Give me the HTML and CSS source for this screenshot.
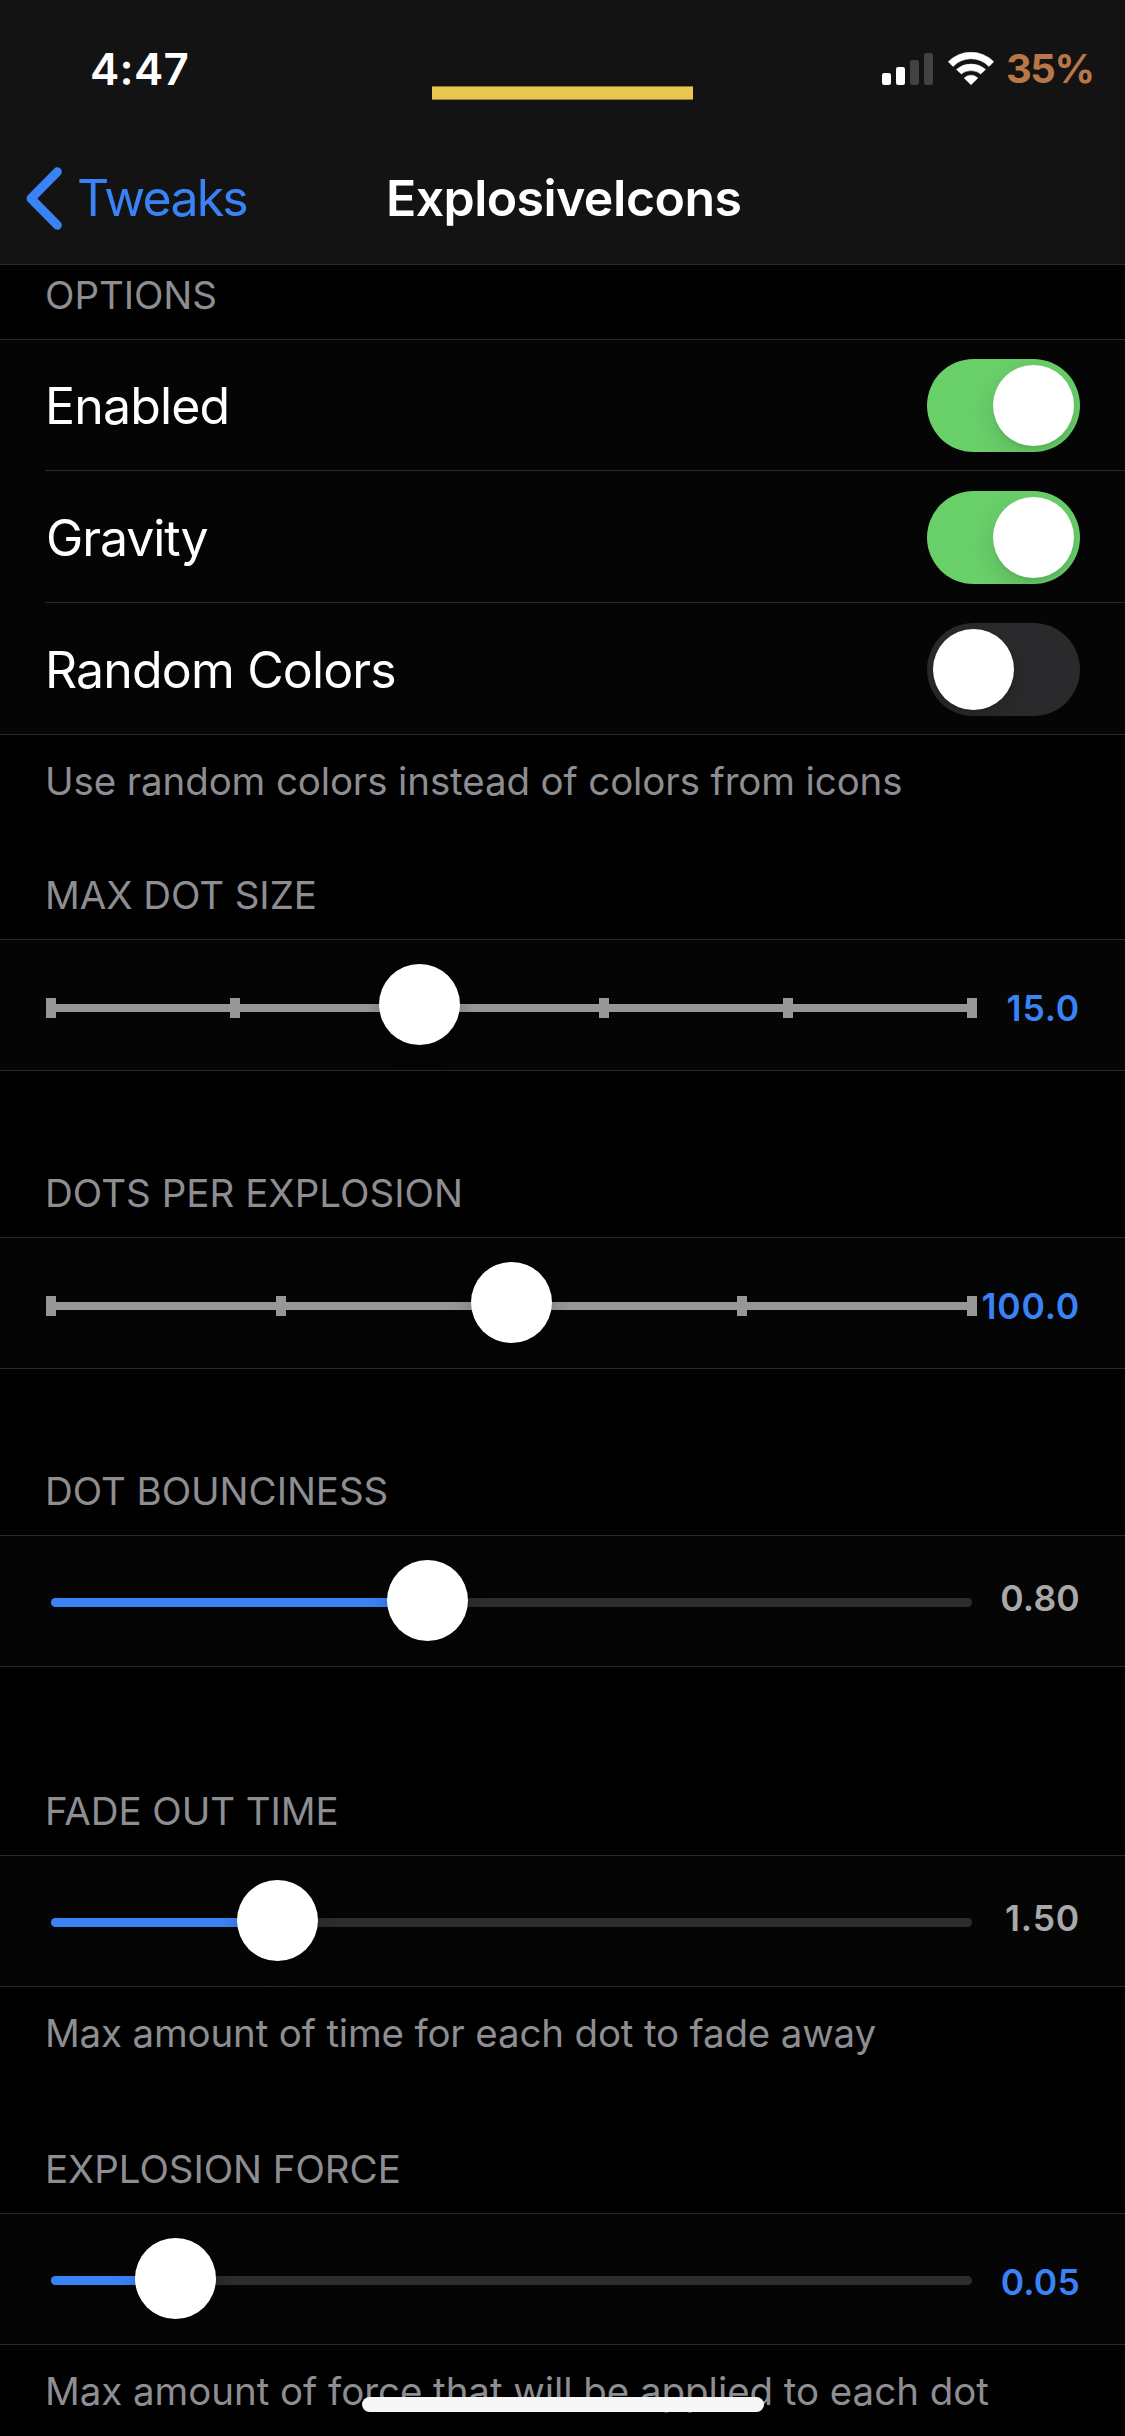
FILE: index.html
```
<!DOCTYPE html>
<html lang="en">
<head>
<meta charset="utf-8">
<title>ExplosiveIcons</title>
<link rel="stylesheet" href="styles.css">
</head>
<body>
<header class="header">
  <div class="status">
    <span class="clock">4:47</span>
    <span class="notch-bar"></span>
    <div class="indicators">
      <svg class="signal" viewBox="0 0 51 32">
        <rect x="0" y="20" width="9" height="12" rx="2.2" fill="#fff"/>
        <rect x="14" y="14" width="9" height="18" rx="2.2" fill="#fff"/>
        <rect x="28" y="7" width="9" height="25" rx="2.2" fill="#424242"/>
        <rect x="42" y="0" width="9" height="32" rx="2.2" fill="#424242"/>
      </svg>
      <svg class="wifi" viewBox="0 0 46 33" fill="#fff" stroke="#fff" stroke-width=".6" stroke-linejoin="round">
        <path d="M.3 9.7A32.1 32.1 0 0 1 45.7 9.7L41 14.4A24.9 24.9 0 0 0 5 14.4Z"/>
        <path d="M8.5 17.4A22.4 22.4 0 0 1 37.5 17.4L32.7 21.9A15.9 15.9 0 0 0 13.3 21.9Z"/>
        <path d="M16.2 26A9.7 9.7 0 0 1 29.8 26L23 32.7Z"/>
      </svg>
      <span class="battery">35%</span>
    </div>
  </div>
  <nav class="nav">
    <a class="back">
      <svg class="chevron" viewBox="0 0 37 63"><path d="M32.3 4.8L6 31.5L32.3 58.2" fill="none" stroke="#3a83f7" stroke-width="9" stroke-linecap="round" stroke-linejoin="round"/></svg>
      <span class="back-label">Tweaks</span>
    </a>
    <h1 class="title">ExplosiveIcons</h1>
  </nav>
</header>

<main>
  <section class="section options">
    <h2 class="label">OPTIONS</h2>
    <div class="group">
      <div class="row"><span class="name">Enabled</span><span class="switch on"><i class="knob"></i></span></div>
      <div class="row"><span class="name name-gravity">Gravity</span><span class="switch on"><i class="knob"></i></span></div>
      <div class="row"><span class="name">Random Colors</span><span class="switch"><i class="knob"></i></span></div>
    </div>
    <p class="note">Use random colors instead of colors from icons</p>
  </section>

  <section class="section dot-size">
    <h2 class="label">MAX DOT SIZE</h2>
    <div class="cell">
      <div class="slider stepped">
        <div class="track"><i></i><i></i><i></i><i></i><i></i><i></i></div>
        <div class="thumb" style="left:40%"></div>
      </div>
      <span class="value editable narrow">15.0</span>
    </div>
  </section>

  <section class="section dots">
    <h2 class="label">DOTS PER EXPLOSION</h2>
    <div class="cell">
      <div class="slider stepped">
        <div class="track"><i></i><i></i><i></i><i></i><i></i></div>
        <div class="thumb" style="left:50%"></div>
      </div>
      <span class="value editable narrow">100.0</span>
    </div>
  </section>

  <section class="section bounce">
    <h2 class="label">DOT BOUNCINESS</h2>
    <div class="cell">
      <div class="slider">
        <div class="track"><div class="fill" style="width:40.9%"></div></div>
        <div class="thumb" style="left:40.9%"></div>
      </div>
      <span class="value">0.80</span>
    </div>
  </section>

  <section class="section fade">
    <h2 class="label">FADE OUT TIME</h2>
    <div class="cell">
      <div class="slider">
        <div class="track"><div class="fill" style="width:24.6%"></div></div>
        <div class="thumb" style="left:24.6%"></div>
      </div>
      <span class="value narrow">1.50</span>
    </div>
    <p class="note note-fade">Max amount of time for each dot to fade away</p>
  </section>

  <section class="section force">
    <h2 class="label">EXPLOSION FORCE</h2>
    <div class="cell">
      <div class="slider">
        <div class="track"><div class="fill" style="width:13.5%"></div></div>
        <div class="thumb" style="left:13.5%"></div>
      </div>
      <span class="value editable">0.05</span>
    </div>
    <p class="note note-force">Max amount of force that will be applied to each dot</p>
  </section>
</main>
<div class="home-indicator"></div>
</body>
</html>
```
FILE: styles.css
```
* { box-sizing: border-box; margin: 0; padding: 0; }

body {
  position: relative;
  width: 1125px;
  height: 2436px;
  overflow: hidden;
  background: #000;
  color: #fff;
  font-family: Inter, "Liberation Sans", sans-serif;
}

/* Header */
.header { height: 265px; background: #131313; border-bottom: 1px solid #2a2a2b; }
.status {
  display: grid;
  grid-template-columns: 432px 261px 432px;
  align-items: start;
  height: 132px;
  padding-top: 44px;
}
.clock { padding-left: 90px; font-size: 44px; font-weight: 600; line-height: 50px; letter-spacing: .29px; }
.notch-bar { height: 14px; margin-top: 42px; background: #e9c74f; border: solid #8f7c37; border-width: 1px 0; }
.indicators { display: flex; align-items: flex-start; padding-left: 189px; }
.signal { width: 51px; height: 32px; margin-top: 9px; }
.wifi { width: 46px; height: 33px; margin: 8px 12px 0 15px; }
.battery { color: #b87748; font-size: 40px; font-weight: 650; line-height: 50px; letter-spacing: -1.5px; }

.nav { display: grid; grid-template-columns: 361px 1fr; height: 132px; padding-left: 25px; }
.back { display: flex; align-items: flex-start; padding-top: 35px; color: #3a83f7; }
.chevron { width: 37px; height: 63px; }
.back-label { margin-left: 15px; font-size: 50px; line-height: 62px; letter-spacing: -1.8px; }
.title { padding-top: 35px; font-size: 50px; font-weight: 600; line-height: 62px; letter-spacing: -.58px; }

/* Sections */
.options { margin-top: 7px; }
.dot-size { margin-top: 68px; }
.dots, .bounce { margin-top: 99px; }
.fade { margin-top: 121px; }
.force { margin-top: 90px; }

.label, .note {
  padding-left: 45px;
  color: #8d8d92;
  font-size: 38.5px;
  font-weight: 400;
  line-height: 46px;
  white-space: nowrap;
}
.label { padding-bottom: 21px; letter-spacing: -.06px; }
.dots .label { letter-spacing: .04px; }
.note { padding-top: 23px; letter-spacing: -.13px; }
.note-fade { letter-spacing: -.17px; }
.note-force { letter-spacing: -.05px; }

.group, .cell { background: #050505; border: solid #2a2a2b; border-width: 1px 0; }

/* Switch rows */
.group { padding-left: 45px; }
.row {
  display: flex;
  align-items: center;
  justify-content: space-between;
  height: 132px;
  padding: 2px 45px 0 0;
  border-bottom: 1px solid #2a2a2b;
}
.row:first-child { height: 131px; padding-top: 1px; }
.row:last-child { height: 131px; border-bottom: 0; }
.name { font-size: 50px; line-height: 60px; letter-spacing: -.84px; }
.name-gravity { padding-left: 1px; letter-spacing: -1.1px; }

.switch { display: flex; width: 153px; height: 93px; padding: 6px; border-radius: 47px; background: #2a2a2c; overflow: hidden; }
.switch.on { justify-content: flex-end; background: #69cf69; }
.knob { width: 81px; height: 81px; border-radius: 50%; background: #fff; box-shadow: 0 9px 24px rgba(0, 0, 0, .13), 0 3px 3px rgba(0, 0, 0, .05); }

/* Slider cells */
.cell { display: flex; height: 132px; padding: 0 45px 0 51px; }
.slider { position: relative; flex: none; width: 921px; padding-top: 62px; }
.track { height: 9px; border-radius: 4.5px; background: #2d2d2f; }
.fill { height: 9px; border-radius: 4.5px 0 0 4.5px; background: #3a83f7; }
.stepped { padding-top: 64px; }
.stepped .track { display: flex; justify-content: space-between; align-items: center; height: 8px; border-radius: 0; background: #979797; }
.stepped .track i { width: 10px; height: 20px; margin: 0 -5px; background: #979797; }
.thumb {
  position: absolute;
  top: 24px;
  width: 81px;
  height: 81px;
  margin-left: -40.5px;
  border-radius: 50%;
  background: #fff;
  box-shadow: 0 6px 20px rgba(0, 0, 0, .22);
}
.value {
  display: flex;
  flex: 1;
  justify-content: flex-end;
  padding-top: 41px;
  color: #a9a9a9;
  font-size: 35.5px;
  font-weight: 600;
  line-height: 44px;
  letter-spacing: .2px;
  white-space: nowrap;
}
.value.narrow { letter-spacing: .8px; }
.value.editable { padding-top: 47px; color: #3a83f7; }

.home-indicator { position: absolute; left: 362px; top: 2397px; width: 402px; height: 15px; border-radius: 8px; background: #f7f7f8; }
```
